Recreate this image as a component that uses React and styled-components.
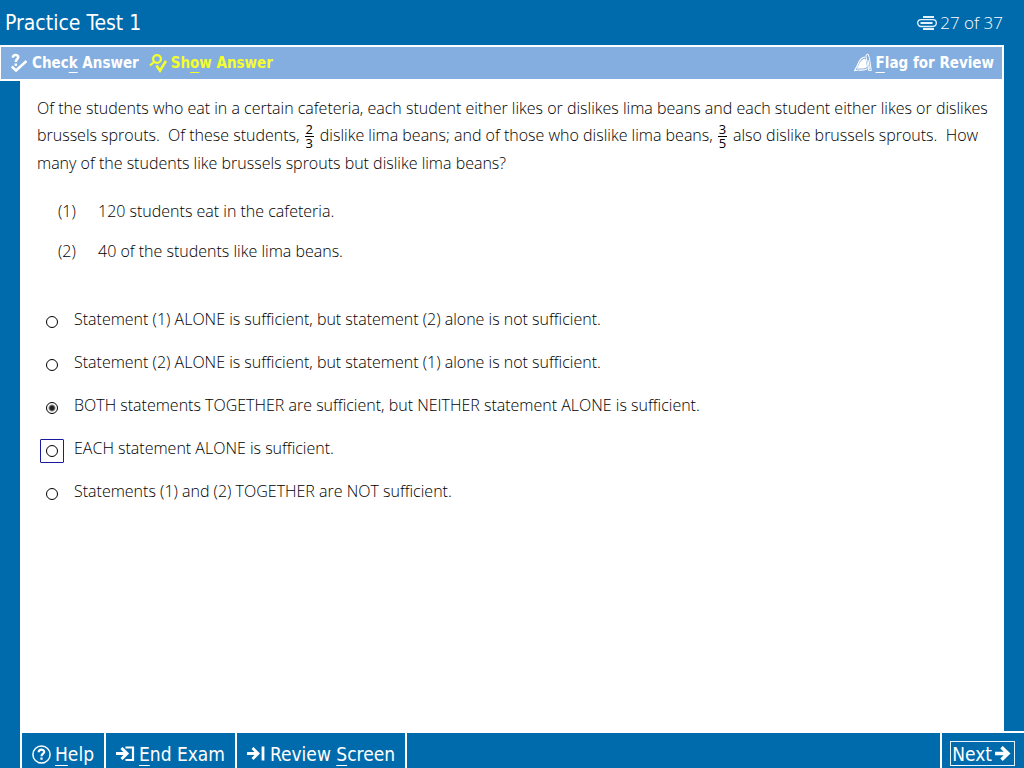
import React, { useState } from 'react';
import styled, { createGlobalStyle } from 'styled-components';

const GlobalStyle = createGlobalStyle`
  * {
    box-sizing: border-box;
  }

  body {
    margin: 0;
    background: #006bac;
    font-family: "DejaVu Sans Condensed", "DejaVu Sans", sans-serif;
  }

  button {
    font-family: inherit;
    cursor: pointer;
  }
`;

const Page = styled.div`
  min-height: 100vh;
  display: flex;
  flex-direction: column;
`;

const Header = styled.header`
  height: 45px;
  padding: 0 21px 0 5px;
  display: flex;
  align-items: center;
  justify-content: space-between;
  color: #fff;

  h1 {
    margin: 0;
    font-size: 21px;
    font-weight: 400;
  }
`;

const Progress = styled.div`
  display: flex;
  align-items: center;
  gap: 3px;
  color: #fff;
  font-family: "Open Sans", "Noto Sans", sans-serif;
  font-size: 17px;
  font-weight: 300;
  line-height: 20px;
`;

const Toolbar = styled.div`
  height: 36px;
  margin-right: 20px;
  padding: 0 8px 0 10px;
  display: flex;
  align-items: center;
  justify-content: space-between;
  background: #84aee0;
  border: 2px solid #fff;
  border-left-width: 1px;

  div {
    display: flex;
    gap: 10px;
  }
`;

const ToolButton = styled.button`
  padding: 0;
  display: flex;
  align-items: center;
  gap: 4px;
  border: 0;
  background: none;
  color: ${(props) => (props.$active ? '#f4ff2b' : '#fff')};
  font-size: 15px;
  font-weight: 700;
`;

const HotKey = styled.span`
  text-decoration: underline;
  text-decoration-thickness: 1px;
  text-underline-offset: 4px;
  text-decoration-skip-ink: none;
`;

const Question = styled.main`
  flex: 1;
  margin: 0 20px;
  padding: 14px 6px 20px 17px;
  background: #fff;
  color: #000;
  font-family: "Open Sans", "Noto Sans", sans-serif;
  font-size: 16px;
  font-weight: 300;
  font-variant-ligatures: none;
  line-height: 27px;

  p {
    margin: 0;
  }
`;

const Fraction = styled.span`
  width: 9px;
  margin: 0 2px 0 1px;
  display: inline-flex;
  flex-direction: column;
  vertical-align: middle;
  text-align: center;
  font-size: 13px;
  font-weight: 400;
  line-height: 13px;

  span:first-child {
    border-bottom: 1px solid #000;
  }
`;

const Statements = styled.ol`
  margin: 21px 0 0;
  padding: 0 0 0 21px;
  list-style: none;

  li {
    margin-bottom: 13px;
    display: flex;
  }

  span {
    width: 40px;
  }
`;

const Choices = styled.fieldset`
  margin: 41px 0 0;
  padding: 0 0 0 3px;
  border: 0;
`;

const Choice = styled.label`
  height: 27px;
  margin-bottom: 16px;
  display: flex;
  align-items: flex-start;
  gap: 10px;
`;

const RadioBox = styled.span`
  width: 24px;
  height: 24px;
  margin-top: 4px;
  display: flex;
  align-items: center;
  justify-content: center;
  border: 1px solid ${(props) => (props.$focused ? '#1a1a9c' : 'transparent')};
  border-radius: 1px;

  input {
    appearance: none;
    width: 12px;
    height: 12px;
    margin: 0;
    border: 1px solid #000;
    border-radius: 50%;
    outline: 0;
  }

  input:checked {
    background: radial-gradient(circle, #222 0 2px, #fff 4px);
  }
`;

const Footer = styled.footer`
  height: 37px;
  margin-left: 20px;
  display: flex;
  justify-content: space-between;
  border-top: 2px solid #fff;
  border-left: 2px solid #fff;

  div {
    display: flex;
  }
`;

const NavButton = styled.button`
  padding: 7px 10px 0;
  display: flex;
  align-items: center;
  gap: 4px;
  border: 0;
  border-right: 2px solid #fff;
  background: none;
  color: #fff;
  font-size: 19px;
  line-height: 24px;
`;

const NextArea = styled.div`
  padding: 8px 9px 2px 8px;
  border-left: 2px solid #fff;
`;

const NextButton = styled.button`
  padding: 0 3px 0 1px;
  display: flex;
  align-items: center;
  gap: 3px;
  border: 1px solid #e4f4ff;
  background: none;
  color: #fff;
  font-size: 19px;
  line-height: 22px;
`;

const PagesIcon = () => (
  <svg width="20" height="16" viewBox="0 0 20 16" fill="none" stroke="#e4f4ff" aria-hidden="true">
    <path d="M6 2h11M6 14h11" strokeWidth="2" />
    <rect x="0.7" y="4.7" width="18.6" height="6.8" rx="3.4" strokeWidth="1.3" />
    <path d="M3.5 8h12" strokeWidth="2" />
  </svg>
);

const CheckIcon = () => (
  <svg width="17" height="20" viewBox="0 0 17 20" fill="none" stroke="currentColor" strokeWidth="2.5" aria-hidden="true">
    <path d="M1.8 4.6C2 2.6 3.3 2 4.7 2c2.3 0 3.2 2 2 3.5C5.9 6.5 4.8 6.8 4.8 9" />
    <path d="M4.8 10.5v2.4" />
    <path d="M0.8 13.5l4.2 4L15.5 8" />
  </svg>
);

const ShowIcon = () => (
  <svg width="18" height="20" viewBox="0 0 18 20" fill="none" stroke="currentColor" strokeWidth="2.2" aria-hidden="true">
    <circle cx="8" cy="6" r="3.9" />
    <path d="M5.2 8.8L1 12.5" />
    <path d="M7.5 12.5l3.5 5.2 6-9.7" strokeWidth="2.6" />
  </svg>
);

const FlagIcon = () => (
  <svg width="18" height="20" viewBox="0 0 18 20" fill="none" stroke="#fff" aria-hidden="true">
    <path d="M12.2 1.8l1.8-.8 1.3 3.5 2 13h-2.5L12 4z" />
    <path d="M11.3 4C7.500 4 5.300 7.500 4 11 3 14 1.800 14.500.8 17.500c4-1.500 8 1 12.700-1.800" strokeWidth="1.2" />
    <path d="M11 6C8 6.500 6.300 9 5.300 12c-.6 1.600-1.300 2.300-1.800 3.300 3-.7 6 .5 9-1.300z" fill="#fff" />
    <path d="M14 7l1.500 9" />
  </svg>
);

const HelpIcon = () => (
  <svg width="19" height="19" viewBox="0 0 19 19" fill="none" stroke="currentColor" aria-hidden="true">
    <circle cx="9.5" cy="9.5" r="8.6" strokeWidth="1.5" />
    <path d="M6.7 7.3c.1-3.6 5.8-3.3 5.5-.3-.2 1.700-2.600 1.800-2.700 4.200M9.500 12.500v2.300" strokeWidth="2.2" />
  </svg>
);

const EndIcon = () => (
  <svg width="19" height="16" viewBox="0 0 19 16" fill="none" stroke="currentColor" strokeWidth="3" aria-hidden="true">
    <path d="M0 7.5h10.500M5.500 2l5.500 5.500L5.500 13" />
    <path d="M9.500 1.500h7.500v12.500H9.500" strokeWidth="2.2" />
  </svg>
);

const ReviewIcon = () => (
  <svg width="19" height="16" viewBox="0 0 19 16" fill="none" stroke="currentColor" strokeWidth="2.8" aria-hidden="true">
    <path d="M0 7.500h10.500M5.500 2l5.500 5.500L5.500 13" />
    <path d="M16 0.500v14" />
  </svg>
);

const NextIcon = () => (
  <svg width="16" height="16" viewBox="0 0 16 16" fill="none" stroke="currentColor" strokeWidth="3.5" aria-hidden="true">
    <path d="M0 7.500h13M6.500 1.200l6.500 6.300-6.500 6.300" />
  </svg>
);

const choices = [
  'Statement (1) ALONE is sufficient, but statement (2) alone is not sufficient.',
  'Statement (2) ALONE is sufficient, but statement (1) alone is not sufficient.',
  'BOTH statements TOGETHER are sufficient, but NEITHER statement ALONE is sufficient.',
  'EACH statement ALONE is sufficient.',
  'Statements (1) and (2) TOGETHER are NOT sufficient.',
];

function Frac({ top, bottom }) {
  return (
    <Fraction>
      <span>{top}</span>
      <span>{bottom}</span>
    </Fraction>
  );
}

function App() {
  const [answer, setAnswer] = useState(2);
  const [focused, setFocused] = useState(3);

  return (
    <>
      <GlobalStyle />
      <Page>
        <Header>
          <h1>Practice Test 1</h1>
          <Progress>
            <PagesIcon />
            27 of 37
          </Progress>
        </Header>
        <Toolbar>
          <div>
            <ToolButton type="button">
              <CheckIcon />
              <span>Chec<HotKey>k</HotKey> Answer</span>
            </ToolButton>
            <ToolButton type="button" $active>
              <ShowIcon />
              <span>Sh<HotKey>o</HotKey>w Answer</span>
            </ToolButton>
          </div>
          <ToolButton type="button">
            <FlagIcon />
            <span><HotKey>F</HotKey>lag for Review</span>
          </ToolButton>
        </Toolbar>
        <Question>
          <p>
            Of the students who eat in a certain cafeteria, each student either likes or dislikes lima
            beans and each student either likes or dislikes brussels sprouts.&nbsp; Of these
            students, <Frac top="2" bottom="3" /> dislike lima beans; and of those who dislike lima
            beans, <Frac top="3" bottom="5" /> also dislike brussels sprouts.&nbsp; How many of the
            students like brussels sprouts but dislike lima beans?
          </p>
          <Statements>
            <li><span>(1)</span>120 students eat in the cafeteria.</li>
            <li><span>(2)</span>40 of the students like lima beans.</li>
          </Statements>
          <Choices>
            {choices.map((text, i) => (
              <Choice key={text}>
                <RadioBox $focused={focused === i}>
                  <input
                    type="radio"
                    name="answer"
                    checked={answer === i}
                    onChange={() => setAnswer(i)}
                    onFocus={() => setFocused(i)}
                  />
                </RadioBox>
                {text}
              </Choice>
            ))}
          </Choices>
        </Question>
        <Footer>
          <div>
            <NavButton type="button">
              <HelpIcon />
              <span><HotKey>H</HotKey>elp</span>
            </NavButton>
            <NavButton type="button">
              <EndIcon />
              <span><HotKey>E</HotKey>nd Exam</span>
            </NavButton>
            <NavButton type="button">
              <ReviewIcon />
              <span>Review <HotKey>S</HotKey>creen</span>
            </NavButton>
          </div>
          <NextArea>
            <NextButton type="button">
              <span><HotKey>N</HotKey>ext</span>
              <NextIcon />
            </NextButton>
          </NextArea>
        </Footer>
      </Page>
    </>
  );
}

export default App;
